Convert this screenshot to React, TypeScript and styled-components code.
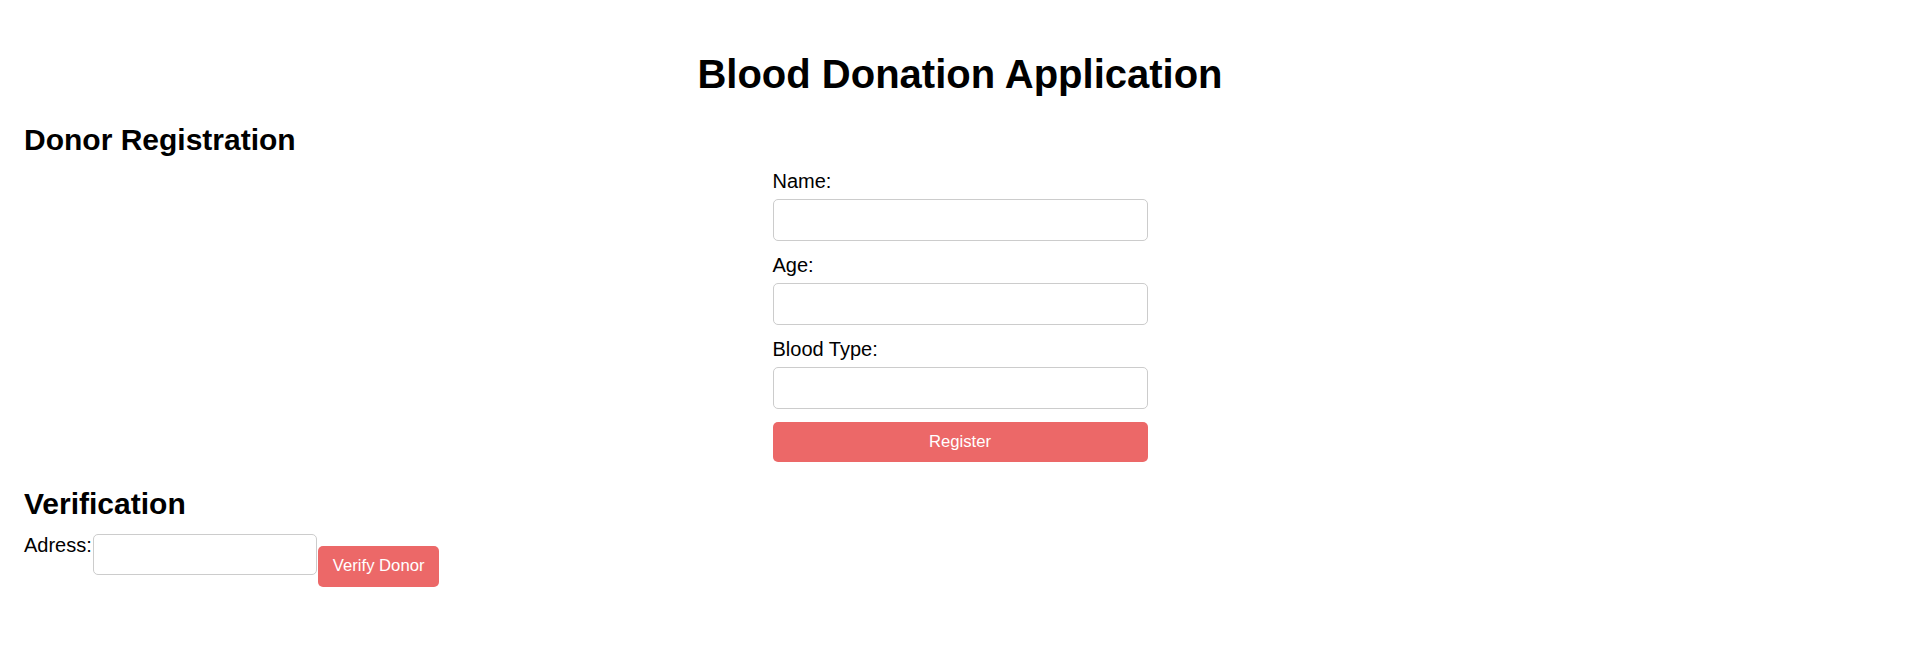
import styled, { createGlobalStyle } from 'styled-components';

const GlobalStyle = createGlobalStyle`
    body {
        margin: 0;
        background: #ffffff;
        font-family: 'Liberation Sans', Arial, sans-serif;
        color: #000000;
    }
`;

const ACCENT = '#ec6868';

const App = () => {
    return (
        <>
            <GlobalStyle />
            <Page>
                <Title>Blood Donation Application</Title>

                <SectionTitle>Donor Registration</SectionTitle>
                <RegisterForm onSubmit={(ev) => ev.preventDefault()}>
                    <Label htmlFor="name">Name:</Label>
                    <TextInput id="name" type="text" />
                    <Label htmlFor="age">Age:</Label>
                    <TextInput id="age" type="text" />
                    <Label htmlFor="bloodType">Blood Type:</Label>
                    <TextInput id="bloodType" type="text" />
                    <SubmitButton type="submit">Register</SubmitButton>
                </RegisterForm>

                <SectionTitle $top={24.5}>Verification</SectionTitle>
                <VerifyRow>
                    <InlineLabel htmlFor="address">Adress:</InlineLabel>
                    <AddressInput id="address" type="text" />
                    <VerifyButton type="button">Verify Donor</VerifyButton>
                </VerifyRow>
            </Page>
        </>
    );
};

const Page = styled.div`
    display: flex;
    flex-direction: column;
    padding: 51px 24px 0;
`;

const Title = styled.h1`
    margin: 0;
    font-size: 40px;
    line-height: 46px;
    font-weight: 700;
    text-align: center;
`;

interface SectionTitleProps {
    $top?: number;
}

const SectionTitle = styled.h2<SectionTitleProps>`
    margin: ${(props) => props.$top ?? 26}px 0 0;
    font-size: 30px;
    line-height: 34.5px;
    font-weight: 700;
`;

const RegisterForm = styled.form`
    display: flex;
    flex-direction: column;
    align-self: center;
    width: 375px;
    margin-top: 12.5px;
`;

const Label = styled.label`
    font-size: 20px;
    line-height: 23px;
    margin-bottom: 6.25px;
`;

const TextInput = styled.input`
    box-sizing: border-box;
    width: 100%;
    height: 42px;
    margin: 0 0 12.5px;
    padding: 0 10px;
    border: 1.25px solid #cccccc;
    border-radius: 5px;
    font-family: 'Liberation Sans', Arial, sans-serif;
    font-size: 16.67px;
    outline: none;
`;

const SubmitButton = styled.button`
    box-sizing: border-box;
    width: 100%;
    height: 40px;
    margin-top: 1px;
    border: none;
    border-radius: 5px;
    background-color: ${ACCENT};
    color: #ffffff;
    font-family: 'Liberation Sans', Arial, sans-serif;
    font-size: 16.67px;
    cursor: pointer;
`;

const VerifyRow = styled.div`
    display: flex;
    align-items: flex-start;
    margin-top: 12.5px;
`;

const InlineLabel = styled.label`
    font-size: 20px;
    line-height: 23px;
`;

const AddressInput = styled.input`
    box-sizing: border-box;
    width: 224px;
    height: 41px;
    margin: 0 0 0 1px;
    padding: 0 10px;
    border: 1.25px solid #cccccc;
    border-radius: 5px;
    font-family: 'Liberation Sans', Arial, sans-serif;
    font-size: 16.67px;
    outline: none;
`;

const VerifyButton = styled.button`
    box-sizing: border-box;
    height: 41px;
    margin: 12px 0 0 1px;
    padding: 0 15px;
    border: none;
    border-radius: 5px;
    background-color: ${ACCENT};
    color: #ffffff;
    font-family: 'Liberation Sans', Arial, sans-serif;
    font-size: 16.67px;
    cursor: pointer;
`;

export default App;
